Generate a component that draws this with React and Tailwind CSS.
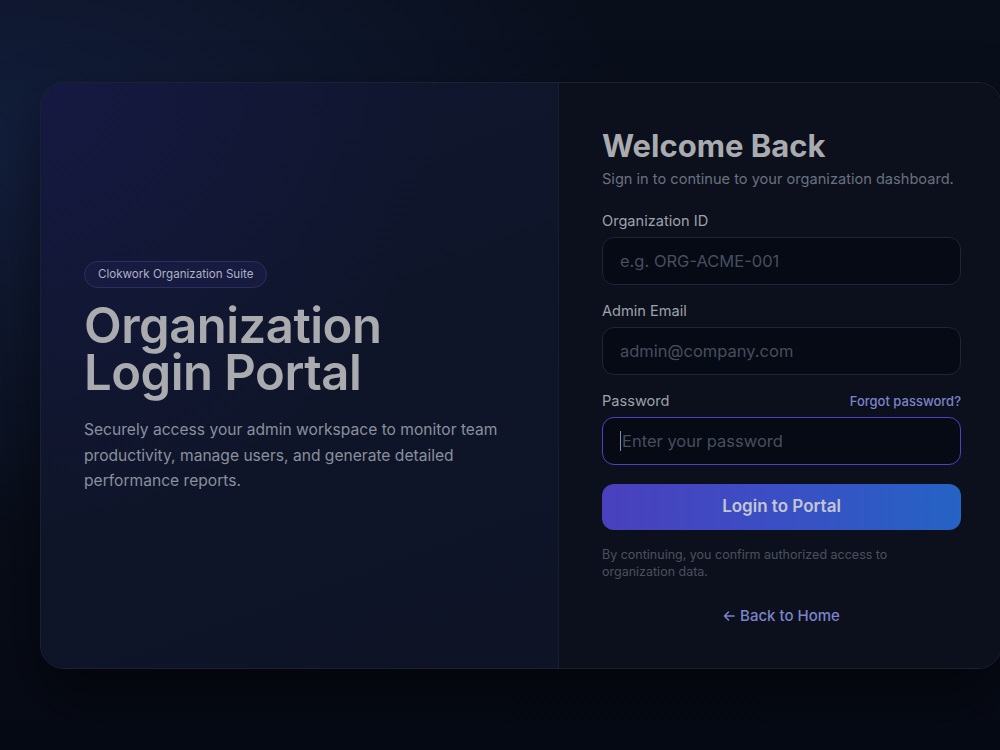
export default function App() {
  return (
    <div
      className="relative w-[1000px] h-[750px] overflow-hidden bg-[#090e1b]"
      style={{ fontFamily: "Inter, 'Noto Sans', sans-serif" }}
    >
      <div className="absolute inset-0 bg-[radial-gradient(ellipse_at_0%_20%,rgba(30,50,100,0.45),transparent_45%)]" />
      <div className="absolute inset-0 bg-[linear-gradient(180deg,rgba(0,0,0,0)_60%,rgba(3,6,14,0.5)_100%)]" />
      <div className="relative pt-[82px] pl-[40px]">
        <div className="flex w-[962px] h-[587px] rounded-[24px] border border-[#1a2132] overflow-hidden shadow-[0_30px_60px_rgba(0,0,0,0.5)]">
          <div className="relative w-[518px] border-r border-[#161d2c] bg-[linear-gradient(160deg,#10162f_0%,#0f1529_45%,#0e1426_100%)]">
            <div className="absolute inset-0 bg-[radial-gradient(ellipse_at_0%_0%,rgba(30,30,95,0.4),transparent_55%)]" />
            <div className="relative h-full flex flex-col justify-center pl-[43px] pr-[40px] pt-[4px]">
              <div className="self-start h-[27px] px-[13px] flex items-center rounded-full border border-[#2a2f63] bg-[#171b3f] text-[11.6px] text-[#aeb2c6]">
                Clokwork Organization Suite
              </div>
              <h1 className="mt-[14px] text-[49px] leading-[47px] font-semibold tracking-[-0.5px] text-[#a9abaf]">
                Organization
                <br />
                Login Portal
              </h1>
              <p className="mt-[21px] text-[15.6px] leading-[25.5px] text-[#8a909d] w-[430px]">
                Securely access your admin workspace to monitor team productivity, manage users, and generate detailed performance reports.
              </p>
            </div>
          </div>
          <div className="flex-1 bg-[#0b101c] pl-[43px] pr-[40px] pt-[44px]">
            <h2 className="text-[31px] leading-[38px] font-bold text-[#a9abaf]">Welcome Back</h2>
            <p className="mt-[4px] text-[14.6px] leading-[20px] whitespace-nowrap text-[#6a7080]">
              Sign in to continue to your organization dashboard.
            </p>

            <div className="mt-[22px] text-[14.6px] leading-[20px] text-[#9ea2ab]">Organization ID</div>
            <div className="mt-[6px] h-[48px] rounded-[12px] border border-[#1e2535] bg-[#050a15] flex items-center pl-[17px] text-[16.5px] text-[#474e5e]">
              e.g. ORG-ACME-001
            </div>

            <div className="mt-[16px] text-[14.6px] leading-[20px] text-[#9ea2ab]">Admin Email</div>
            <div className="mt-[6px] h-[48px] rounded-[12px] border border-[#1e2535] bg-[#050a15] flex items-center pl-[17px] text-[16.5px] text-[#474e5e]">
              admin@company.com
            </div>

            <div className="mt-[16px] flex items-center justify-between">
              <span className="text-[14.6px] leading-[20px] text-[#9ea2ab]">Password</span>
              <span className="text-[13px] leading-[20px] font-medium text-[#7b83c9]">Forgot password?</span>
            </div>
            <div className="mt-[6px] h-[48px] rounded-[12px] border border-[#4a44c4] bg-[#050a15] flex items-center pl-[17px] text-[16.5px] text-[#474e5e]">
              <span className="w-px h-[20px] bg-[#8a8fa0] mr-[1px]" />
              Enter your password
            </div>

            <div className="mt-[19px] h-[46px] rounded-[12px] bg-[linear-gradient(90deg,#4a40bd_0%,#3a4fc4_50%,#2563c4_100%)] flex items-center justify-center text-[17px] font-semibold text-[#c3c6d1]">
              Login to Portal
            </div>

            <p className="mt-[16px] text-[12.5px] leading-[17px] text-[#4a5060] w-[300px]">
              By continuing, you confirm authorized access to organization data.
            </p>

            <div className="mt-[25px] flex items-center justify-center gap-[5px] text-[15px] font-medium text-[#7b83c9]">
              <svg width="12" height="12" viewBox="0 0 12 12" fill="none" stroke="currentColor" strokeWidth="1.6" strokeLinecap="round" strokeLinejoin="round">
                <path d="M11 6H1.5M5.5 2L1.5 6l4 4" />
              </svg>
              Back to Home
            </div>
          </div>
        </div>
      </div>
    </div>
  );
}
